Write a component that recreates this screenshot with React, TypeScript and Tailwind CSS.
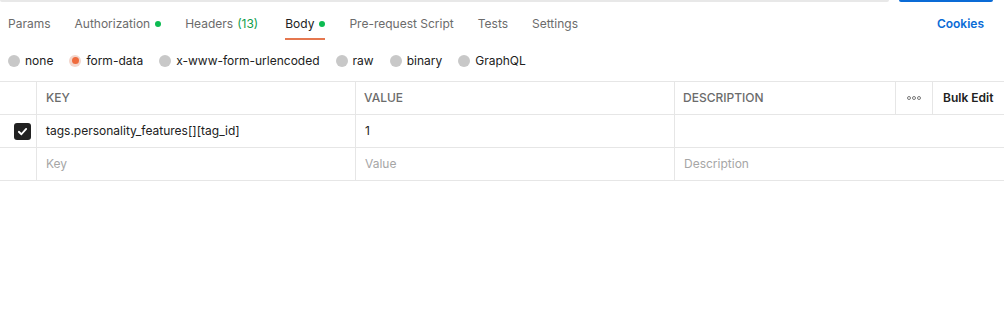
import React from 'react';

type Tab = {
  label: string;
  count?: string;
  dot?: boolean;
  active?: boolean;
};

const tabs: Tab[] = [
  { label: 'Params' },
  { label: 'Authorization', dot: true },
  { label: 'Headers', count: '(13)' },
  { label: 'Body', dot: true, active: true },
  { label: 'Pre-request Script' },
  { label: 'Tests' },
  { label: 'Settings' },
];

const bodyTypes = ['none', 'form-data', 'x-www-form-urlencoded', 'raw', 'binary', 'GraphQL'];

const Radio: React.FC<{ checked?: boolean }> = ({ checked }) =>
  checked ? (
    <span className="w-[12px] h-[12px] rounded-full bg-[#f3d6cc] flex items-center justify-center">
      <span className="w-[7px] h-[7px] rounded-full bg-[#ef6b3d]" />
    </span>
  ) : (
    <span className="w-[12px] h-[12px] rounded-full bg-[#c8c8c8]" />
  );

const App: React.FC = () => {
  return (
    <div className="w-[1004px] h-[326px] bg-white overflow-hidden font-['Inter',sans-serif] text-[12px]">
      {/* bottom edges of url bar and send button */}
      <div className="flex h-[2px]">
        <div className="w-[889px] h-[2px] bg-[#e8e8e8] rounded-b-sm" />
        <div className="ml-[10px] w-[94px] h-[2px] bg-[#0a6bd6] rounded-b-sm" />
      </div>

      {/* Tabs */}
      <div className="flex items-end justify-between pl-2 pr-5 h-[38px] leading-4">
        <div className="flex gap-6">
          {tabs.map((tab) => (
            <div
              key={tab.label}
              className={`flex items-center gap-[5px] pb-[6px] border-b-2 ${
                tab.active ? 'border-[#e5774f] text-[#212121]' : 'border-transparent text-[#6b6b6b]'
              } ${tab.count ? 'mr-[3px]' : ''}`}
            >
              <span>
                {tab.label}
                {tab.count && <span className="ml-1 text-[#0f9d4a]">{tab.count}</span>}
              </span>
              {tab.dot && <span className="w-[6px] h-[6px] rounded-full bg-[#0cbb52]" />}
            </div>
          ))}
        </div>
        <div className="pb-[8px] font-semibold text-[#0a6bd6]">Cookies</div>
      </div>

      {/* Body types */}
      <div className="flex items-center gap-4 pl-2 h-[41px]">
        {bodyTypes.map((t) => (
          <div key={t} className="flex items-center gap-[5px] text-[#212121]">
            <Radio checked={t === 'form-data'} />
            <span>{t}</span>
          </div>
        ))}
      </div>

      {/* Table */}
      <div className="border-t border-[#e6e6e6]">
        <div className="grid grid-cols-[36px_319px_319px_221px_37px_72px] h-[33px] border-b border-[#e6e6e6] font-medium">
          <div />
          <div className="border-l border-[#e6e6e6] flex items-center px-[9px] text-[#6b6b6b]">KEY</div>
          <div className="border-l border-[#e6e6e6] flex items-center px-[8px] text-[#6b6b6b]">VALUE</div>
          <div className="border-l border-[#e6e6e6] flex items-center px-[8px] text-[#6b6b6b]">DESCRIPTION</div>
          <div className="border-l border-[#e6e6e6] flex items-center justify-center gap-[1px]">
            <span className="w-[4px] h-[4px] rounded-full border border-[#7a7a7a]" />
            <span className="w-[4px] h-[4px] rounded-full border border-[#7a7a7a]" />
            <span className="w-[4px] h-[4px] rounded-full border border-[#7a7a7a]" />
          </div>
          <div className="border-l border-[#e6e6e6] flex items-center px-[10px] font-semibold text-[#212121]">Bulk Edit</div>
        </div>

        <div className="grid grid-cols-[36px_319px_319px_330px] h-[33px] border-b border-[#e6e6e6]">
          <div className="flex items-center pl-[14px]">
            <span className="w-[17px] h-[17px] rounded-[3px] bg-[#212121] flex items-center justify-center">
              <svg width="11" height="11" viewBox="0 0 12 12" fill="none">
                <path d="M2 6.3 4.8 9 10 3.2" stroke="#fff" strokeWidth="2" strokeLinecap="round" strokeLinejoin="round" />
              </svg>
            </span>
          </div>
          <div className="border-l border-[#e6e6e6] flex items-center px-[9px] text-[#212121]">
            tags.personality_features[][tag_id]
          </div>
          <div className="border-l border-[#e6e6e6] flex items-center px-[9px] text-[#212121]">1</div>
          <div className="border-l border-[#e6e6e6]" />
        </div>

        <div className="grid grid-cols-[36px_319px_319px_330px] h-[33px] border-b border-[#e6e6e6] text-[#a6a6a6]">
          <div />
          <div className="border-l border-[#e6e6e6] flex items-center px-[9px]">Key</div>
          <div className="border-l border-[#e6e6e6] flex items-center px-[9px]">Value</div>
          <div className="border-l border-[#e6e6e6] flex items-center px-[9px]">Description</div>
        </div>
      </div>
    </div>
  );
};

export default App;
